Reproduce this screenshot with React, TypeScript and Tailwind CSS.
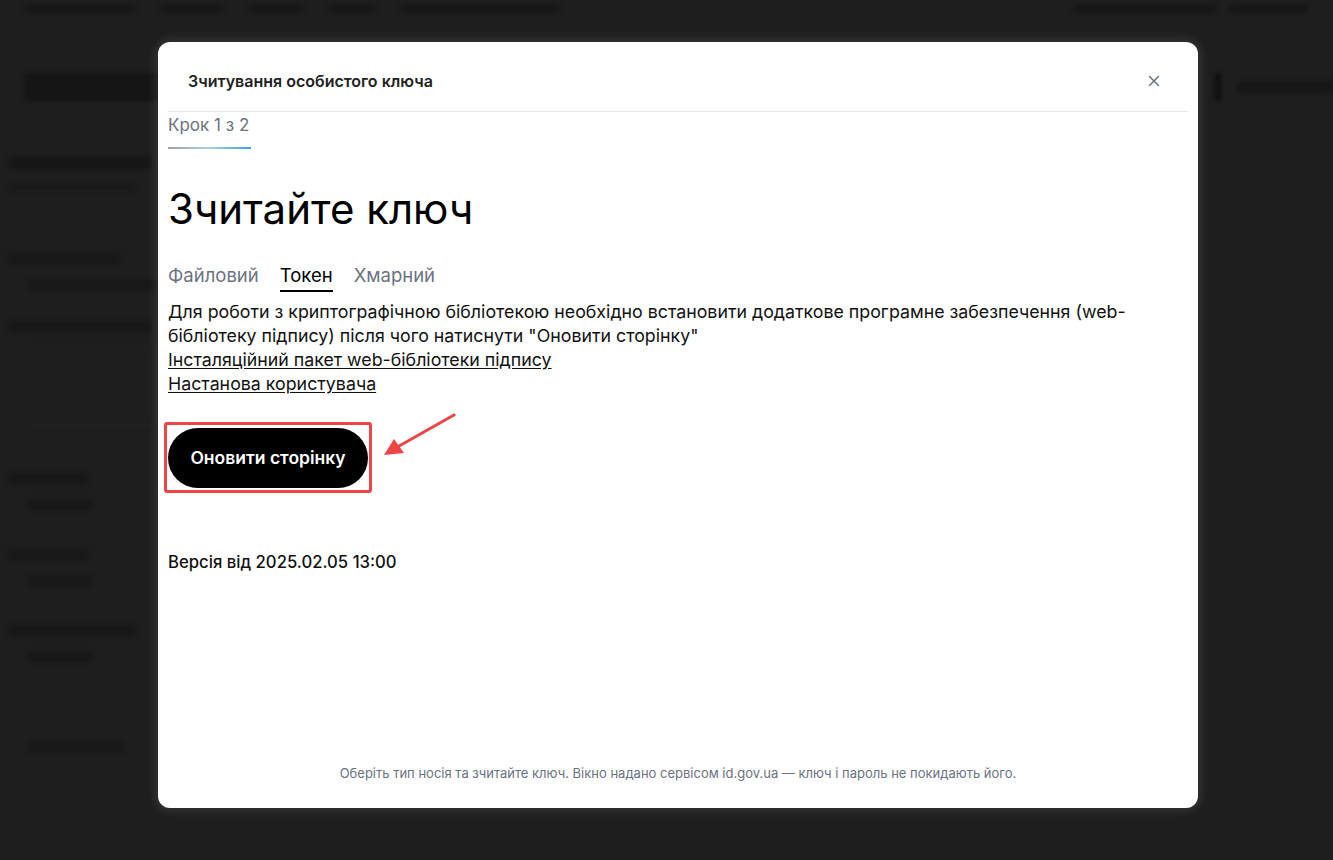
import { X } from "lucide-react"

const FONT = { fontFamily: "Inter, 'Noto Sans', sans-serif" }

// faint page behind the overlay
function BackdropPage() {
  const blob = "rounded bg-[#161616]"
  return (
    <div className="pointer-events-none absolute inset-0 blur-[2px]">
      <div className="flex h-[18px] items-center gap-6 px-6">
        <div className={`${blob} h-2 w-28`} />
        <div className={`${blob} h-2 w-16`} />
        <div className={`${blob} h-2 w-14`} />
        <div className={`${blob} h-2 w-12`} />
        <div className={`${blob} h-2 w-40`} />
        <div className="ml-auto flex gap-3">
          <div className={`${blob} h-2 w-36`} />
          <div className={`${blob} h-2 w-20`} />
        </div>
      </div>
      <div className="mt-[55px] flex items-center justify-between pl-6 pr-0">
        <div className="h-7 w-40 rounded bg-[#151515]" />
        <div className="flex items-center gap-4">
          <div className="h-7 w-[6px] bg-[#0e0e0e]" />
          <div className={`${blob} h-3 w-24`} />
        </div>
      </div>
      <div className="mt-[56px] flex w-[150px] flex-col gap-[14px] pl-2">
        <div className={`${blob} h-3 w-36`} />
        <div className="h-2 w-32 rounded bg-[#1a1a1a]" />
        <div className="mt-12 h-3 w-28 rounded bg-[#181818]" />
        <div className="ml-5 h-3 w-32 rounded bg-[#181818]" />
        <div className="mt-4 h-3 w-36 rounded bg-[#181818]" />
        <div className="ml-5 h-[80px] w-32 rounded border border-[#252525]" />
        <div className="mt-8 h-3 w-20 rounded bg-[#181818]" />
        <div className="ml-5 h-3 w-16 rounded bg-[#181818]" />
        <div className="mt-6 h-3 w-20 rounded bg-[#181818]" />
        <div className="ml-5 h-3 w-16 rounded bg-[#181818]" />
        <div className="mt-6 h-3 w-32 rounded bg-[#181818]" />
        <div className="ml-5 h-3 w-16 rounded bg-[#181818]" />
        <div className="mt-16 ml-5 h-3 w-24 rounded bg-[#181818]" />
      </div>
    </div>
  )
}

export default function App() {
  return (
    <div
      className="relative h-[860px] w-[1333px] overflow-hidden bg-[#1e1e1e]"
      style={FONT}
    >
      <BackdropPage />

      <div className="relative pt-[42px] pl-[158px]">
        <div className="flex h-[766px] w-[1040px] flex-col rounded-xl bg-white px-[10px] shadow-[0_0_10px_3px_rgba(255,255,255,0.1)]">
          {/* Header */}
          <div className="flex h-[70px] items-center justify-between border-b border-[#e5e7eb] pt-2 pl-5 pr-[25px]">
            <h2 className="text-[16px] font-semibold text-[#222]">
              Зчитування особистого ключа
            </h2>
            <X className="size-[18px] text-[#6b7280]" strokeWidth={2} />
          </div>

          {/* Step indicator */}
          <div className="pt-px">
            <div className="inline-block">
              <div className="text-[17px] leading-6 text-[#6b7280]">
                Крок 1 з 2
              </div>
              <div className="mt-[10px] h-[2px] w-[83px] bg-gradient-to-r from-[#a3a3a3] via-[#a7d3dc] to-[#3b9cf0]" />
            </div>
          </div>

          <h1 className="mt-[35px] text-[42px] leading-[50px] font-normal text-black">
            Зчитайте ключ
          </h1>

          {/* Tabs */}
          <div className="mt-[29px] flex gap-[21px] text-[18.5px] leading-6">
            <span className="text-[#6b7280]">Файловий</span>
            <span className="border-b-2 border-black pb-[3px] text-black">
              Токен
            </span>
            <span className="text-[#6b7280]">Хмарний</span>
          </div>

          {/* Body */}
          <div className="mt-2 text-[17.8px] leading-6 text-[#111]">
            <p>
              Для роботи з криптографічною бібліотекою необхідно встановити
              додаткове програмне забезпечення (web-бібліотеку підпису) після
              чого натиснути "Оновити сторінку"
            </p>
            <a className="block w-fit underline underline-offset-2">
              Інсталяційний пакет web-бібліотеки підпису
            </a>
            <a className="block w-fit underline underline-offset-2">
              Настанова користувача
            </a>
          </div>

          <div className="relative mt-8 w-fit">
            <button className="h-[60px] w-[200px] rounded-full bg-black text-[17.5px] font-semibold text-white">
              Оновити сторінку
            </button>
            {/* annotation */}
            <div className="absolute -top-[6px] -left-1 h-[71px] w-[208px] rounded-[3px] border-[3px] border-[#ef4444]" />
            <svg
              className="absolute -top-[16px] left-[212px]"
              width="90"
              height="50"
              viewBox="0 0 90 50"
            >
              <line
                x1="74"
                y1="3"
                x2="12"
                y2="38"
                stroke="#ef4444"
                strokeWidth="3"
                strokeLinecap="round"
              />
              <polygon points="4,43 14,27 24,41" fill="#ef4444" />
            </svg>
          </div>

          <div className="mt-[62px] text-[16.7px] leading-6 font-medium text-[#111]">
            Версія від 2025.02.05 13:00
          </div>

          <div className="mt-auto pb-[26px] text-center text-[13px] leading-[18px] text-[#6b7280]">
            Оберіть тип носія та зчитайте ключ. Вікно надано сервісом id.gov.ua
            — ключ і пароль не покидають його.
          </div>
        </div>
      </div>
    </div>
  )
}
